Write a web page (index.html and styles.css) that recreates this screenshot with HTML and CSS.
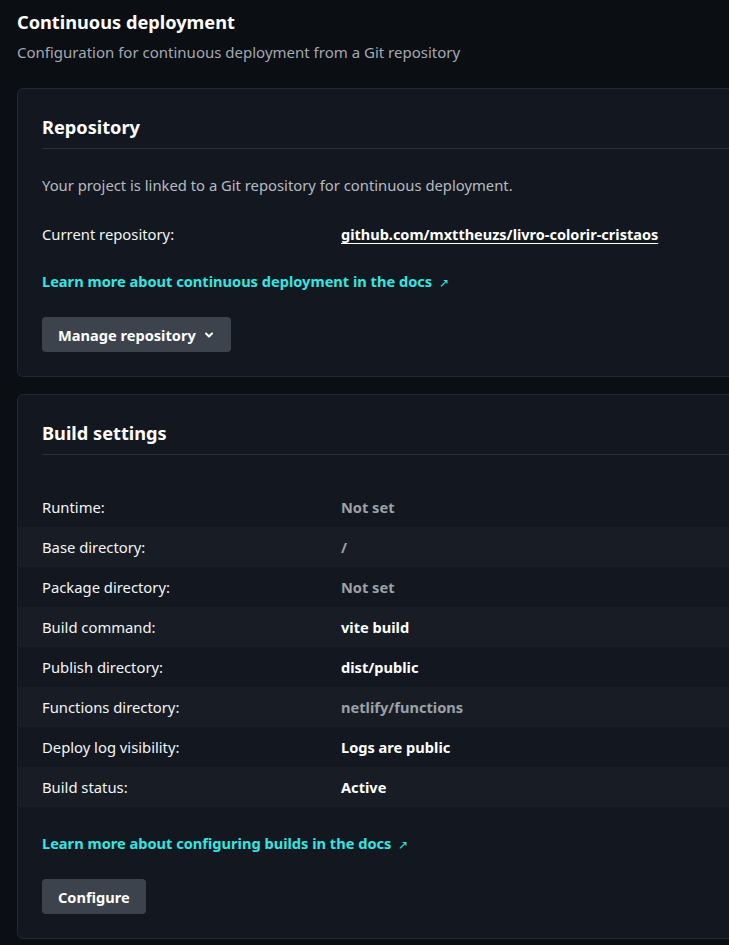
FILE: index.html
```html
<!DOCTYPE html>
<html lang="en">
<head>
<meta charset="utf-8">
<title>Continuous deployment</title>
<link rel="stylesheet" href="styles.css">
</head>
<body>
<main class="page">
  <header class="page-head">
    <h1 class="page-title">Continuous deployment</h1>
    <p class="page-sub">Configuration for continuous deployment from a Git repository</p>
  </header>

  <section class="card">
    <h2 class="card-title">Repository</h2>
    <p class="muted intro">Your project is linked to a Git repository for continuous deployment.</p>
    <div class="repo-row">
      <span class="label">Current repository:</span>
      <a class="repo-link" href="#">github.com/mxttheuzs/livro-colorir-cristaos</a>
    </div>
    <a class="doc-link" href="#">Learn more about continuous deployment in the docs <span class="arrow">↗</span></a>
    <div class="actions">
      <button class="btn">Manage repository
        <svg class="chev" width="10" height="10" viewBox="0 0 10 10"><path d="M2 3.5 L5 6.5 L8 3.5" fill="none" stroke="currentColor" stroke-width="2" stroke-linecap="round" stroke-linejoin="round"/></svg>
      </button>
    </div>
  </section>

  <section class="card">
    <h2 class="card-title">Build settings</h2>
    <dl class="settings">
      <div class="row"><dt>Runtime:</dt><dd class="dim">Not set</dd></div>
      <div class="row"><dt>Base directory:</dt><dd class="dim">/</dd></div>
      <div class="row"><dt>Package directory:</dt><dd class="dim">Not set</dd></div>
      <div class="row"><dt>Build command:</dt><dd class="strong">vite build</dd></div>
      <div class="row"><dt>Publish directory:</dt><dd class="strong">dist/public</dd></div>
      <div class="row"><dt>Functions directory:</dt><dd class="dim">netlify/functions</dd></div>
      <div class="row"><dt>Deploy log visibility:</dt><dd class="strong">Logs are public</dd></div>
      <div class="row"><dt>Build status:</dt><dd class="strong">Active</dd></div>
    </dl>
    <a class="doc-link doc-link-2" href="#">Learn more about configuring builds in the docs <span class="arrow">↗</span></a>
    <div class="actions">
      <button class="btn">Configure</button>
    </div>
  </section>
</main>
</body>
</html>
```
FILE: styles.css
```css
html, body {
  margin: 0;
  padding: 0;
  background: #0b0e13;
  overflow: hidden;
}
body {
  font-family: "Noto Sans", "Open Sans", sans-serif;
  color: #f2f4f5;
  font-size: 14.8px;
}
.page {
  padding: 10px 0 0 17px;
  width: 760px;
}
.page-title {
  margin: 0;
  font-size: 18.2px;
  line-height: 24px;
  font-weight: 700;
  color: #ffffff;
}
.page-sub {
  margin: 8px 0 0;
  font-size: 15px;
  line-height: 20px;
  color: #a3a9b1;
}
.card {
  margin-top: 26px;
  background: #131820;
  border: 1px solid #232831;
  border-radius: 6px;
  padding: 24px 0 24px 24px;
  display: flex;
  flex-direction: column;
  align-items: flex-start;
}
.card + .card {
  margin-top: 17px;
}
.card-title {
  align-self: stretch;
  margin: 0;
  font-size: 18.2px;
  line-height: 28px;
  font-weight: 700;
  color: #ffffff;
  padding-bottom: 7px;
  border-bottom: 1px solid #2c323b;
}
.muted { color: #b6bbc1; }
.intro {
  margin: 26px 0 0;
  line-height: 20px;
}
.repo-row {
  margin-top: 29px;
  display: grid;
  grid-template-columns: 299px auto;
  line-height: 20px;
}
.label { color: #f2f4f5; }
.repo-link {
  color: #ffffff;
  font-weight: 700;
  font-size: 14.5px;
  text-decoration: underline;
  text-underline-offset: 3px;
}
.doc-link {
  margin-top: 27px;
  color: #32e6e2;
  font-weight: 700;
  font-size: 14.6px;
  text-decoration: none;
  line-height: 20px;
  height: 20px;
}
.arrow {
  font-weight: 400;
  font-size: 12px;
  line-height: 12px;
  margin-left: 3px;
}
.actions { margin-top: 26px; }
.btn {
  font-family: inherit;
  font-size: 14.6px;
  font-weight: 700;
  color: #ffffff;
  background: #3d434c;
  border: 0;
  border-radius: 4px;
  height: 35px;
  padding: 0 16px;
  display: flex;
  align-items: center;
  gap: 8px;
}
.chev { margin-right: 1px; }
.settings {
  align-self: stretch;
  margin: 32px 0 0 -24px;
}
.row {
  display: grid;
  grid-template-columns: 299px auto;
  height: 40px;
  align-items: center;
  padding-left: 24px;
}
.row:nth-child(even) { background: #181d25; }
.row dt { margin: 0; color: #f2f4f5; }
.row dd { margin: 0; font-weight: 700; font-size: 14.6px; }
.dim { color: #9aa1a8; }
.strong { color: #ffffff; }
.doc-link-2 { margin-top: 26px; }
```
